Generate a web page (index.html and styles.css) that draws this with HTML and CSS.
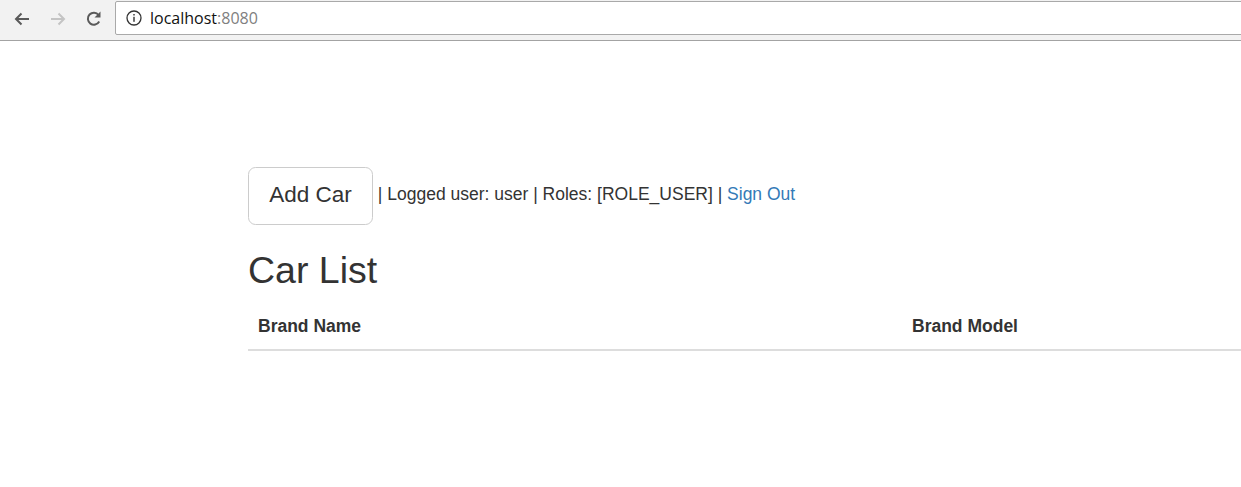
FILE: index.html
```html
<!DOCTYPE html>
<html>
<head>
<meta charset="utf-8">
<title>Car List</title>
<link rel="stylesheet" href="styles.css">
</head>
<body>
<div class="chrome">
  <div class="nav">
    <svg class="nav-icon" width="20" height="20" viewBox="0 0 20 20"><path d="M17 10H4M9.5 4.5L4 10l5.5 5.5" fill="none" stroke="#5a5a5a" stroke-width="2"/></svg>
    <svg class="nav-icon" width="20" height="20" viewBox="0 0 20 20"><path d="M3 10h13M10.5 4.5L16 10l-5.5 5.5" fill="none" stroke="#c4c4c4" stroke-width="2"/></svg>
    <svg class="nav-icon" width="20" height="20" viewBox="0 0 20 20"><path d="M15.2 12.5A6 6 0 1 1 14.6 6" fill="none" stroke="#5a5a5a" stroke-width="2"/><path d="M16.5 2.5v6h-6z" fill="#5a5a5a"/></svg>
  </div>
  <div class="omnibox">
    <svg class="info" width="16" height="16" viewBox="0 0 16 16"><circle cx="8" cy="8" r="7" fill="none" stroke="#333" stroke-width="1.3"/><rect x="7.3" y="6.8" width="1.4" height="5" fill="#333"/><rect x="7.3" y="4" width="1.4" height="1.5" fill="#333"/></svg>
    <span class="host">localhost</span><span class="port">:8080</span>
  </div>
</div>
<main class="page">
  <div class="userbar">
    <a class="btn" href="#">Add Car</a><span class="userinfo"> | Logged user: user | Roles: [ROLE_USER] | <a class="link" href="#">Sign Out</a></span>
  </div>
  <h2 class="title">Car List</h2>
  <table class="cars">
    <thead>
      <tr><th class="col-name">Brand Name</th><th>Brand Model</th></tr>
    </thead>
    <tbody></tbody>
  </table>
</main>
</body>
</html>
```
FILE: styles.css
```css
html, body {
  margin: 0;
  padding: 0;
  background: #fff;
  overflow: hidden;
}
body {
  font-family: "Liberation Sans", Arial, sans-serif;
  color: #333;
}
.chrome {
  height: 40px;
  background: #f2f2f2;
  border-bottom: 1px solid #a3a3a3;
  display: flex;
  align-items: flex-start;
  box-sizing: content-box;
}
.nav {
  flex: none;
  display: flex;
  align-items: center;
  gap: 16px;
  padding-left: 12px;
  height: 37px;
  width: 115px;
  box-sizing: border-box;
}
.nav-icon {
  display: block;
}
.omnibox {
  margin-top: 1px;
  height: 34px;
  flex: 1;
  margin-right: -10px;
  background: #fff;
  border: 1px solid #a9a9a9;
  border-radius: 2px;
  box-sizing: border-box;
  display: flex;
  align-items: center;
  padding-left: 10px;
  font-family: "Open Sans", "Noto Sans", sans-serif;
  font-size: 16px;
}
.info {
  margin-right: 8px;
}
.host {
  color: #111;
}
.port {
  color: #808080;
}
.page {
  padding: 126px 0 0 248px;
  font-size: 17.5px;
  line-height: 1.42857;
}
.userbar {
  display: flex;
  align-items: center;
  white-space: pre;
}
.userinfo {
  margin-bottom: 3px;
}
.btn {
  display: inline-block;
  box-sizing: border-box;
  height: 58px;
  width: 125px;
  line-height: 54px;
  text-align: center;
  font-size: 22.5px;
  color: #333;
  text-decoration: none;
  border: 1px solid #ccc;
  border-radius: 7.5px;
  background: #fff;
}
.link {
  color: #337ab7;
  text-decoration: none;
}
.title {
  font-size: 37.5px;
  font-weight: 500;
  line-height: 1.1;
  margin: 25px 0 12.5px;
}
.cars {
  width: 993px;
  border-collapse: collapse;
  border-spacing: 0;
}
.cars th {
  text-align: left;
  padding: 10px;
  border-bottom: 2.5px solid #ddd;
  font-weight: bold;
  line-height: 25px;
}
.col-name {
  width: 634px;
}
```
